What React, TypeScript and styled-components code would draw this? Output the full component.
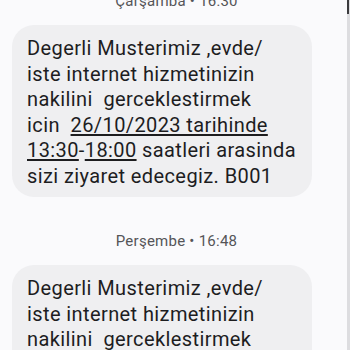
import React from "react";
import styled, { createGlobalStyle } from "styled-components";

const Global = createGlobalStyle`
  html, body { margin: 0; padding: 0; background: #fafafc; overflow: hidden; }
  body { font-family: Roboto, "Noto Sans", sans-serif; }
`;

const Screen = styled.div`
  display: flex;
  width: 350px;
  height: 350px;
  overflow: hidden;
  background: #fafafc;
`;

const Thread = styled.div`
  flex: 1;
  display: flex;
  flex-direction: column;
  margin-top: -9px;
`;

const Track = styled.div`
  width: 3px;
  background: #dddde0;
  display: flex;
  flex-direction: column;
`;

const Thumb = styled.div`
  width: 2px;
  height: 14px;
  background: #3b3b3e;
`;

const DateLabel = styled.div`
  font-size: 15px;
  line-height: 20px;
  letter-spacing: 0.25px;
  color: #555558;
  text-align: center;
  padding-left: 6px;
  margin-bottom: 14px;
`;

const Bubble = styled.div`
  width: 300px;
  box-sizing: border-box;
  margin-left: 12px;
  margin-bottom: 34px;
  padding: 11px 6px 8px 15px;
  background: #efeff1;
  border-radius: 22px;
  font-size: 20px;
  line-height: 25.5px;
  letter-spacing: 0.4px;
  color: #1d1d1f;
  white-space: pre-wrap;
`;

const Link = styled.span`
  text-decoration: underline;
  text-decoration-thickness: 1.5px;
  text-underline-offset: 2px;
`;

const Message = () => (
  <Bubble>
    {"Degerli Musterimiz ,evde/\niste internet hizmetinizin\nnakilini  gerceklestirmek\nicin  "}
    <Link>26/10/2023 tarihinde</Link>
    {"\n"}
    <Link>13:30</Link>-<Link>18:00</Link>
    {" saatleri arasinda\nsizi ziyaret edecegiz. B001"}
  </Bubble>
);

export default function App() {
  return (
    <>
      <Global />
      <Screen>
        <Thread>
          <DateLabel>Çarşamba • 16:30</DateLabel>
          <Message />
          <DateLabel>Perşembe • 16:48</DateLabel>
          <Message />
        </Thread>
        <Track>
          <Thumb />
        </Track>
      </Screen>
    </>
  );
}
